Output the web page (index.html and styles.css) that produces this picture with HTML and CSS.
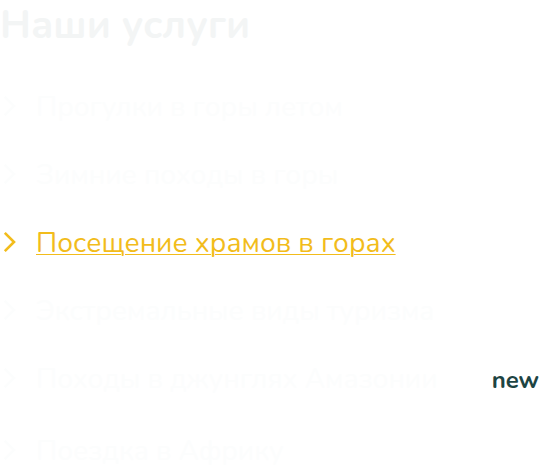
FILE: index.html
```html
<!DOCTYPE html>
<html lang="ru">
<head>
  <meta charset="utf-8">
  <title>Наши услуги</title>
  <link rel="stylesheet" href="styles.css">
</head>
<body>
  <svg class="sprite" aria-hidden="true">
    <symbol id="chevron" viewBox="0 0 12 20">
      <path d="M0.8 0.9 10 10 0.8 19.1" fill="none" stroke="currentColor" stroke-width="2.6"/>
    </symbol>
  </svg>
  <section class="services">
    <h2 class="title">Наши услуги</h2>
    <ul class="list">
      <li class="item"><svg class="arrow"><use href="#chevron"/></svg><a class="link" href="#">Прогулки в горы летом</a></li>
      <li class="item"><svg class="arrow"><use href="#chevron"/></svg><a class="link" href="#">Зимние походы в горы</a></li>
      <li class="item item-active"><svg class="arrow"><use href="#chevron"/></svg><a class="link" href="#">Посещение храмов в горах</a></li>
      <li class="item"><svg class="arrow"><use href="#chevron"/></svg><a class="link" href="#">Экстремальные виды туризма</a></li>
      <li class="item item-new"><svg class="arrow"><use href="#chevron"/></svg><a class="link" href="#">Походы в джунглях Амазонии</a><span class="badge">new</span></li>
      <li class="item"><svg class="arrow"><use href="#chevron"/></svg><a class="link" href="#">Поездка в Африку</a></li>
    </ul>
  </section>
</body>
</html>
```
FILE: styles.css
```css
body {
  margin: 0;
  background: #fff;
  color: #fcfdfd;
  font-family: Nunito, "Noto Sans", sans-serif;
}

.sprite {
  display: none;
}

.title {
  margin: 0 0 38px;
  color: #f3f5f5;
  font-size: 40px;
  line-height: 50px;
  font-weight: 700;
}

.list {
  display: flex;
  flex-direction: column;
  gap: 30px;
  margin: 0;
  padding: 0;
  list-style: none;
}

.item {
  display: flex;
  align-items: baseline;
  font-size: 28px;
  line-height: 38px;
  white-space: nowrap;
}

.item-active {
  color: #f2bc1b;
}

.item-new {
  padding-bottom: 4px;
}

.arrow {
  flex: none;
  width: 14px;
  height: 20px;
  margin: 0 19px 0 3px;
}

.link {
  color: inherit;
  text-decoration: none;
}

.item-active .link {
  text-decoration: underline;
  text-decoration-thickness: 1px;
  text-underline-offset: 2px;
}

.badge {
  margin: 0 21px 0 auto;
  color: #1d4443;
  font-size: 24px;
  line-height: 30px;
  font-weight: 700;
}
```
